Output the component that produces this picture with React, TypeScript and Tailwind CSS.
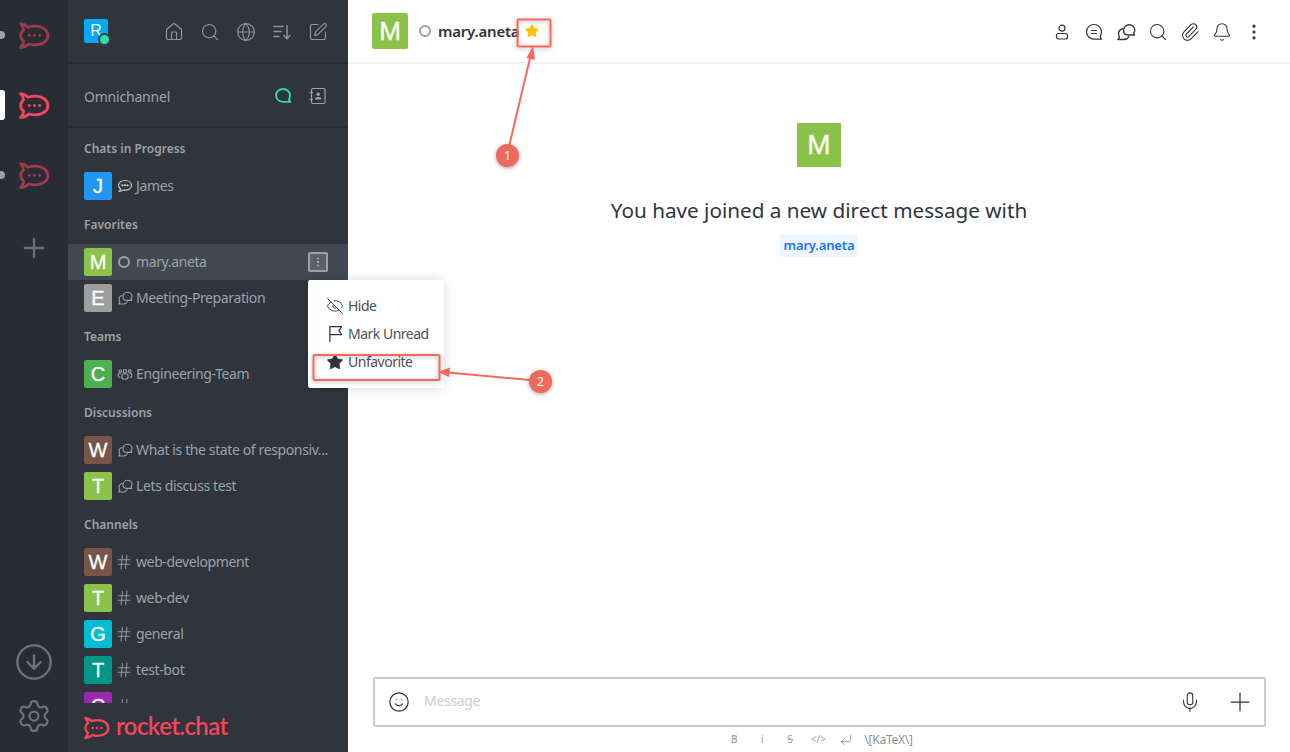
import React from "react";
import { House, Search, Globe, SquarePen, EyeOff, Star, Mic, Plus, Smile, Paperclip, Bell, EllipsisVertical, Settings, CircleArrowDown, CornerDownLeft, Hash } from "lucide-react";

const font = "font-['Noto_Sans','Open_Sans',sans-serif]";

function RocketLogo({ className }: { className?: string }) {
  return (
    <svg viewBox="0 0 30 26" className={className} fill="none" stroke="currentColor" strokeWidth="2.7" strokeLinejoin="round">
      <path d="M1.5 1.5C4 1.8 6.8 3 8.8 5C11 4.3 13.5 4 15.5 4C23 4 28 7.8 28 13C28 18.2 23 22 15.5 22C13.5 22 11.5 21.8 9.5 21.2C7.2 23.3 4.2 24.6 1.5 24.6C3.2 22.8 4.5 20.8 4.5 18.5C2.6 17 1.6 15 1.6 13C1.6 11 2.6 9 4.5 7.5C4.3 5.5 3.2 3.2 1.5 1.5Z" />
      <circle cx="10" cy="13" r="1.4" fill="currentColor" stroke="none" />
      <circle cx="15" cy="13" r="1.4" fill="currentColor" stroke="none" />
      <circle cx="20" cy="13" r="1.4" fill="currentColor" stroke="none" />
    </svg>
  );
}

function SortIcon() {
  return (
    <svg viewBox="0 0 20 20" className="w-5 h-5" fill="none" stroke="currentColor" strokeWidth="1.4" strokeLinecap="round" strokeLinejoin="round">
      <path d="M2 4.5h9M2 9.5h7M2 14.5h5M15 3.5v13M12 13.5l3 3.2 3-3.2" />
    </svg>
  );
}

function BubbleIcon({ className }: { className?: string }) {
  return (
    <svg viewBox="0 0 18 18" className={className} fill="none" stroke="currentColor" strokeWidth="1.8" strokeLinecap="round" strokeLinejoin="round">
      <path d="M9 2C5 2 2 4.8 2 8.4C2 12 5 14.8 9 14.8H16.5C15.6 14 15.2 13.2 15 12.2C15.7 11.1 16 9.8 16 8.4C16 4.8 13 2 9 2Z" />
    </svg>
  );
}

function ContactIcon() {
  return (
    <svg viewBox="0 0 18 18" className="w-[18px] h-[18px]" fill="none" stroke="currentColor" strokeWidth="1.2" strokeLinecap="round">
      <rect x="2.5" y="1.5" width="13.5" height="15" rx="1.5" />
      <path d="M1 5.5h2.5M1 12.5h2.5" />
      <circle cx="9.2" cy="7.2" r="1.7" fill="currentColor" stroke="none" />
      <path d="M6 12.5c0-2 1.4-2.6 3.2-2.6s3.2.6 3.2 2.6z" fill="currentColor" stroke="none" />
    </svg>
  );
}

function DiscussionIcon({ className }: { className?: string }) {
  return (
    <svg viewBox="0 0 16 16" className={className} fill="none" stroke="currentColor" strokeWidth="1.1" strokeLinejoin="round">
      <path d="M6 7C6 4.2 8 2.2 10.5 2.2C13 2.2 15 4 15 6.4C15 7.4 14.7 8.3 14.1 9L14.8 10.4H10.5C8 10.4 6 9.4 6 7Z" />
      <path d="M5.6 5.2C3.4 5.8 2 7.4 2 9.4C2 10.3 2.3 11.2 2.8 11.9L1.6 14H6.5C8.2 14 9.7 13 10.4 11.4" />
    </svg>
  );
}

function LinesBubble({ className }: { className?: string }) {
  return (
    <svg viewBox="0 0 16 16" className={className} fill="none" stroke="currentColor" strokeWidth="1.2" strokeLinecap="round" strokeLinejoin="round">
      <path d="M8 2.5C4.2 2.5 1.5 4.6 1.5 7.3C1.5 8.7 2.3 10 3.6 10.8C3.5 11.8 3 12.7 2 13.5C3.8 13.5 5.2 12.8 6.2 11.9C6.8 12 7.4 12.1 8 12.1C11.8 12.1 14.5 10 14.5 7.3C14.5 4.6 11.8 2.5 8 2.5Z" />
      <circle cx="5.4" cy="7.3" r=".55" fill="currentColor" />
      <circle cx="8" cy="7.3" r=".55" fill="currentColor" />
      <circle cx="10.6" cy="7.3" r=".55" fill="currentColor" />
    </svg>
  );
}

function TeamIcon({ className }: { className?: string }) {
  return (
    <svg viewBox="0 0 16 16" className={className} fill="none" stroke="currentColor" strokeWidth="1.1" strokeLinejoin="round">
      <circle cx="8" cy="5.2" r="1.7" />
      <circle cx="3.3" cy="5" r="1.3" />
      <circle cx="12.7" cy="5" r="1.3" />
      <path d="M5 9.2C5 8 6 7.8 8 7.8C10 7.8 11 8 11 9.2V11.5C11 12.5 10 13.2 8 13.2C6 13.2 5 12.5 5 11.5Z" />
      <path d="M4 7.3H2.4C1.6 7.3 1.2 7.8 1.2 8.5V10C1.2 10.9 2 11.4 3.4 11.4M12 7.3H13.6C14.4 7.3 14.8 7.8 14.8 8.5V10C14.8 10.9 14 11.4 12.6 11.4" />
    </svg>
  );
}

function StatusRing({ className }: { className?: string }) {
  return <span className={`inline-block rounded-full border-2 border-[#9ea2a8] ${className ?? ""}`} />;
}

type Row = { letter: string; color: string; label: string; icon: "ring" | "disc" | "team" | "hash" | "chat" };

const sections: { title: string; rows: Row[] }[] = [
  { title: "Chats in Progress", rows: [{ letter: "J", color: "bg-[#2196f3]", label: "James", icon: "chat" }] },
  {
    title: "Favorites",
    rows: [
      { letter: "M", color: "bg-[#8bc34a]", label: "mary.aneta", icon: "ring" },
      { letter: "E", color: "bg-[#9e9e9e]", label: "Meeting-Preparation", icon: "disc" },
    ],
  },
  { title: "Teams", rows: [{ letter: "C", color: "bg-[#4caf50]", label: "Engineering-Team", icon: "team" }] },
  {
    title: "Discussions",
    rows: [
      { letter: "W", color: "bg-[#795548]", label: "What is the state of responsiv...", icon: "disc" },
      { letter: "T", color: "bg-[#8bc34a]", label: "Lets discuss test", icon: "disc" },
    ],
  },
  {
    title: "Channels",
    rows: [
      { letter: "W", color: "bg-[#795548]", label: "web-development", icon: "hash" },
      { letter: "T", color: "bg-[#8bc34a]", label: "web-dev", icon: "hash" },
      { letter: "G", color: "bg-[#00bcd4]", label: "general", icon: "hash" },
      { letter: "T", color: "bg-[#009688]", label: "test-bot", icon: "hash" },
      { letter: "C", color: "bg-[#9c27b0]", label: "", icon: "hash" },
    ],
  },
];

function RowIcon({ kind }: { kind: Row["icon"] }) {
  if (kind === "ring") return <StatusRing className="w-3 h-3 -ml-[2px]" />;
  if (kind === "disc") return <DiscussionIcon className="w-4 h-4 -ml-[1px]" />;
  if (kind === "team") return <TeamIcon className="w-4 h-4 -ml-[1px]" />;
  if (kind === "chat") return <LinesBubble className="w-4 h-4 -ml-[1px] text-[#c8cbd0]" />;
  return <Hash className="w-[18px] h-[18px] -ml-[2px] shrink-0" strokeWidth={1.2} />;
}

function RoomRow({ row }: { row: Row }) {
  const hovered = row.label === "mary.aneta";
  return (
    <div className={`h-9 flex items-center pl-4 pr-[14px] ${hovered ? "bg-[#414852]" : ""}`}>
      <div className={`w-7 h-7 rounded-[2px] shrink-0 flex items-center justify-center text-white text-[20px] [-webkit-text-stroke:0.3px_white] font-['Liberation_Sans',sans-serif] ${row.color}`}>
        {row.letter}
      </div>
      <div className="w-4 ml-[5px] mr-[3px] flex items-center justify-center shrink-0 text-[#9ea2a8]">
        <RowIcon kind={row.icon} />
      </div>
      <span className="text-[14px] pb-[2px] tracking-[-0.38px] whitespace-nowrap text-[#9ea2a8] flex-1 min-w-0">{row.label}</span>
      {hovered && (
        <div className="w-5 h-5 shrink-0 mr-[6px] border-2 border-[#9ea2a8] rounded-[2px] bg-[#5a616c] flex items-center justify-center text-[#c4c7cc]">
          <EllipsisVertical className="w-3 h-3" strokeWidth={2} />
        </div>
      )}
    </div>
  );
}

function Rail() {
  return (
    <div className="w-[68px] shrink-0 h-full bg-[#282c34] flex flex-col items-stretch">
      {[false, true, false].map((active, i) => (
        <div key={i} className="h-[70px] relative flex items-center justify-center">
          <span className={active ? "absolute left-0 w-[5px] h-[30px] bg-white rounded-r-[3px]" : "absolute left-0 w-[5px] h-[8px] bg-[#9ea2a8] rounded-r-full"} />
          <RocketLogo className={`w-[31px] h-[27px] ml-[1px] ${active ? "text-[#f5455c]" : "text-[#9c3a4b]"}`} />
        </div>
      ))}
      <div className="h-[76px] flex items-center justify-center text-[#6c727a]">
        <Plus className="w-8 h-8" strokeWidth={1.7} />
      </div>
      <div className="mt-auto flex flex-col items-center gap-4 pb-[18px] text-[#6c727a]">
        <CircleArrowDown className="w-10 h-10" strokeWidth={1.4} />
        <Settings className="w-9 h-9" strokeWidth={1.5} />
      </div>
    </div>
  );
}

function Sidebar() {
  return (
    <div className="w-[280px] shrink-0 h-full bg-[#2f343d] flex flex-col">
      <div className="h-16 shrink-0 border-b-2 border-[#282c34] flex items-center pl-4 pr-[20px]">
        <div className="relative w-6 h-6 rounded-[2px] bg-[#03a9f4] text-white text-[16px] flex items-center justify-center font-['Liberation_Sans',sans-serif]">
          R
          <span className="absolute -right-[3px] -bottom-[3px] w-[13px] h-[13px] rounded-full bg-[#2de0a5] border-[2px] border-[#3a3f48]" />
        </div>
        <div className="ml-auto mt-[1px] flex items-center gap-4 text-[#8d96a3]">
          <House className="w-5 h-5" strokeWidth={1.4} />
          <Search className="w-5 h-5" strokeWidth={1.4} />
          <Globe className="w-5 h-5" strokeWidth={1.4} />
          <SortIcon />
          <SquarePen className="w-5 h-5" strokeWidth={1.4} />
        </div>
      </div>
      <div className="h-16 shrink-0 border-b-2 border-[#282c34] flex items-center pl-4 pr-[21px]">
        <span className="text-[14px] mt-[3px] tracking-[-0.2px] text-[#9ea2a8]">Omnichannel</span>
        <div className="ml-auto mt-[2px] flex items-center gap-[17px]">
          <BubbleIcon className="w-[18px] h-[18px] text-[#2de0a5]" />
          <span className="text-[#9ea2a8]"><ContactIcon /></span>
        </div>
      </div>
      <div className="flex-1 min-h-0 overflow-hidden">
        {sections.map((s) => (
          <div key={s.title}>
            <div className="h-10 pl-4 pt-3 text-[12px] font-semibold leading-[18px] text-[#9ea2a8]">{s.title}</div>
            {s.rows.map((r, i) => (
              <RoomRow key={i} row={r} />
            ))}
          </div>
        ))}
      </div>
      <div className="h-[49px] shrink-0 flex items-center pl-4 gap-[6px] text-[#f5455c]">
        <RocketLogo className="w-[26px] h-[24px]" />
        <span className="text-[24px] leading-none pb-[4px] font-semibold tracking-[-0.6px] font-['Lato',sans-serif]">rocket.chat</span>
      </div>
    </div>
  );
}

function ContextMenu() {
  return (
    <div className="absolute left-[308px] top-[280px] w-[136px] h-[108px] bg-white rounded-[2px] shadow-[0_0_12px_rgba(0,0,0,0.15)] pt-3 pl-[18px] text-[14px] tracking-[-0.5px] text-[#4a5159]">
      <div className="h-7 flex items-center gap-[4px]">
        <EyeOff className="w-[18px] h-[18px] text-[#2f343d]" strokeWidth={1.2} />
        <span className="pb-[2px]">Hide</span>
      </div>
      <div className="h-7 flex items-center gap-[4px]">
        <svg viewBox="0 0 16 16" className="w-[18px] h-[18px] text-[#2f343d]" fill="none" stroke="currentColor" strokeWidth="1.1" strokeLinejoin="round">
          <path d="M3.5 15V1.5H14L11.5 5L14 8.5H3.5" />
        </svg>
        <span className="pb-[2px]">Mark Unread</span>
      </div>
      <div className="h-7 flex items-center gap-[4px]">
        <Star className="w-[18px] h-[18px] text-[#2f343d]" fill="currentColor" strokeWidth={1} />
        <span className="pb-[2px]">Unfavorite</span>
      </div>
    </div>
  );
}

function Annotations() {
  const red = "#f4695c";
  return (
    <svg className="absolute inset-0 w-[1290px] h-[752px] pointer-events-none" viewBox="0 0 1290 752">
      <defs>
        <filter id="s" x="-50%" y="-50%" width="200%" height="200%">
          <feDropShadow dx="0" dy="1" stdDeviation="2" floodColor="#000" floodOpacity="0.3" />
        </filter>
      </defs>
      <rect x="517.5" y="19.5" width="33" height="27" rx="1" fill="none" stroke={red} strokeWidth="2" filter="url(#s)" />
      <rect x="313.5" y="355" width="126" height="25" rx="1" fill="none" stroke={red} strokeWidth="2" filter="url(#s)" />
      <path d="M507 155L531 54" stroke={red} strokeWidth="2" />
      <path d="M533 46L526.5 58L535 60Z" fill={red} />
      <path d="M540 381L448 372.5" stroke={red} strokeWidth="2" />
      <path d="M438 372L450 367.5L449 377Z" fill={red} />
    </svg>
  );
}

function Badge({ n, cls }: { n: string; cls: string }) {
  return (
    <div className={`absolute w-[23px] h-[23px] rounded-full bg-[#ee6a5f] shadow-[0_1px_4px_rgba(0,0,0,0.35)] text-white text-[12px] flex items-center justify-center ${cls}`}>
      {n}
    </div>
  );
}

function Main() {
  return (
    <div className="flex-1 min-w-0 h-full bg-white flex flex-col">
      <div className="h-16 shrink-0 border-b-2 border-[#f2f3f5] flex items-center pl-6 pr-[26px]">
        <div className="w-9 h-9 rounded-[2px] bg-[#8bc34a] text-white text-[26px] [-webkit-text-stroke:0.3px_white] flex items-center justify-center font-['Liberation_Sans',sans-serif]">M</div>
        <StatusRing className="w-3 h-3 ml-[11px]" />
        <span className="ml-[7px] text-[15px] tracking-[-0.2px] font-semibold text-[#2f343d]">mary.aneta</span>
        <Star className="w-[14px] h-[14px] ml-[6px] text-[#ffc300]" fill="currentColor" />
        <div className="ml-auto mt-[1px] flex items-center gap-3 text-[#2f343d]">
          <svg viewBox="0 0 20 20" className="w-5 h-5" fill="none" stroke="currentColor" strokeWidth="1.2">
            <circle cx="10" cy="6.2" r="3" />
            <rect x="4.5" y="11.5" width="11" height="5.5" rx="2" />
          </svg>
          <svg viewBox="0 0 20 20" className="w-5 h-5" fill="none" stroke="currentColor" strokeWidth="1.2" strokeLinecap="round" strokeLinejoin="round">
            <path d="M10 2.5C5.8 2.5 2.5 5.7 2.5 9.8C2.5 13.9 5.8 17.1 10 17.1H17.5C16.8 16.4 16.4 15.5 16.2 14.4C17 13.2 17.5 11.6 17.5 9.8C17.5 5.7 14.2 2.5 10 2.5Z" />
            <path d="M7.5 8.5h5M7.5 11.5h5" />
          </svg>
          <DiscussionIcon className="w-5 h-5" />
          <Search className="w-5 h-5" strokeWidth={1.3} />
          <Paperclip className="w-5 h-5" strokeWidth={1.3} />
          <Bell className="w-5 h-5" strokeWidth={1.3} />
          <EllipsisVertical className="w-5 h-5" strokeWidth={1.8} />
        </div>
      </div>
      <div className="flex-1 min-h-0 flex flex-col items-center pt-[59px]">
        <div className="w-11 h-11 bg-[#8bc34a] text-white text-[28px] [-webkit-text-stroke:0.3px_white] flex items-center justify-center font-['Liberation_Sans',sans-serif]">M</div>
        <div className="mt-[27px] text-[20.7px] leading-[32px] text-[#2f343d]">You have joined a new direct message with</div>
        <div className="mt-[8px] h-[23px] px-1 bg-[#f0f6ff] text-[#1d74f5] text-[13px] tracking-[-0.15px] font-semibold rounded-[2px] flex items-center">mary.aneta</div>
      </div>
      <div className="shrink-0 pl-[25px] pr-[24px]">
        <div className="h-[50px] border-2 border-[#cbced1] rounded-[2px] flex items-center pl-[13px] pr-[9px] text-[#2f343d]">
          <Smile className="w-[22px] h-[22px]" strokeWidth={1.3} />
          <span className="ml-[14px] pb-[3px] text-[14px] tracking-[-0.3px] text-[#cbced1]">Message</span>
          <Mic className="w-[22px] h-[22px] ml-auto" strokeWidth={1.2} />
          <Plus className="w-[30px] h-[30px] ml-[24px]" strokeWidth={1} />
        </div>
        <div className="h-[25px] flex items-center justify-center text-[10px] text-[#9ea2a8] pr-[6px]">
          <span className="w-7 text-center font-semibold">B</span>
          <span className="w-7 text-center">i</span>
          <span className="w-7 text-center line-through">S</span>
          <span className="w-7 text-center">&lt;/&gt;</span>
          <span className="w-7 flex justify-center text-[#6c727a]">
            <CornerDownLeft className="w-[14px] h-[14px]" strokeWidth={1.2} />
          </span>
          <span className="ml-[4px] text-[12px] tracking-[-0.25px] text-[#8d8f94]">\[KaTeX\]</span>
        </div>
      </div>
    </div>
  );
}

export default function App() {
  return (
    <div className={`relative w-[1290px] h-[752px] overflow-hidden flex ${font}`}>
      <Rail />
      <Sidebar />
      <Main />
      <ContextMenu />
      <Annotations />
      <Badge n="1" cls="left-[496px] top-[144px]" />
      <Badge n="2" cls="left-[529px] top-[370px]" />
    </div>
  );
}
